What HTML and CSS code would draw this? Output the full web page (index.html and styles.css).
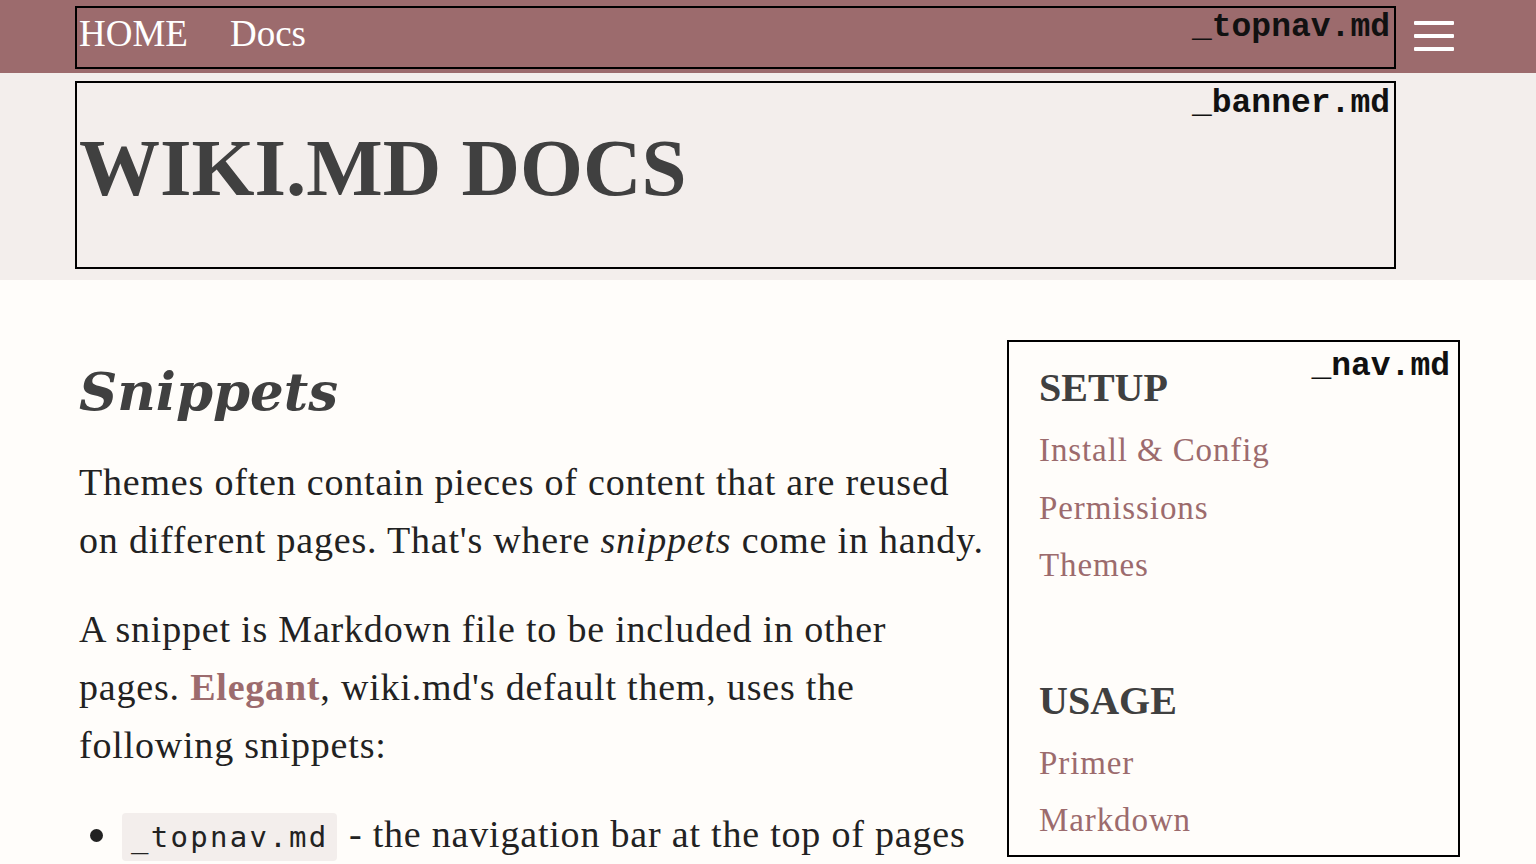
FILE: index.html
```html
<!DOCTYPE html>
<html lang="en">
<head>
<meta charset="utf-8">
<title>Snippets - wiki.md docs</title>
<link rel="stylesheet" href="styles.css">
</head>
<body>
<header class="topbar">
  <div class="wrap topbar-inner">
    <nav class="snippet-box topnav">
      <a class="topnav-link" href="#">HOME</a>
      <a class="topnav-link" href="#">Docs</a>
      <span class="snippet-label">_topnav.md</span>
    </nav>
    <button class="burger" aria-label="Menu">
      <span></span><span></span><span></span>
    </button>
  </div>
</header>
<section class="banner">
  <div class="wrap banner-inner">
    <div class="snippet-box banner-box">
      <h1 class="site-title">WIKI.MD DOCS</h1>
      <span class="snippet-label">_banner.md</span>
    </div>
  </div>
</section>
<main class="wrap main">
  <article class="content">
    <h1 class="page-title">Snippets</h1>
    <p>Themes often contain pieces of content that are reused on different pages. That's where <em>snippets</em> come in handy.</p>
    <p>A snippet is Markdown file to be included in other pages. <a class="strong-link" href="#">Elegant</a>, wiki.md's default them, uses the following snippets:</p>
    <ul class="list">
      <li><code>_topnav.md</code> - the navigation bar at the top of pages</li>
    </ul>
  </article>
  <aside class="snippet-box sidenav">
    <span class="snippet-label">_nav.md</span>
    <h2 class="side-head">SETUP</h2>
    <a class="side-link" href="#">Install &amp; Config</a>
    <a class="side-link" href="#">Permissions</a>
    <a class="side-link" href="#">Themes</a>
    <h2 class="side-head usage">USAGE</h2>
    <a class="side-link" href="#">Primer</a>
    <a class="side-link" href="#">Markdown</a>
  </aside>
</main>
</body>
</html>
```
FILE: styles.css
```css
* { box-sizing: border-box; }
html, body { margin: 0; padding: 0; }
body {
  background: #fffdfa;
  color: #222;
  font-family: "Liberation Serif", "DejaVu Serif", serif;
  overflow: hidden;
}
a { text-decoration: none; }
.wrap {
  margin-left: 75px;
  width: 1385px;
}
.topbar {
  background: #9c6b6d;
  height: 73px;
  padding-top: 6px;
}
.topbar-inner {
  display: flex;
  align-items: flex-start;
}
.snippet-box {
  position: relative;
  border: 2px solid #000;
}
.snippet-label {
  position: absolute;
  top: 3px;
  right: 4px;
  font-family: "Liberation Mono", monospace;
  font-weight: bold;
  font-size: 33px;
  line-height: 1;
  letter-spacing: 0;
  color: #111;
}
.topnav {
  width: 1321px;
  height: 63px;
  display: flex;
  align-items: center;
  gap: 42px;
  padding: 0 0 8px 2px;
}
.topnav-link {
  color: #fff;
  font-size: 37px;
  line-height: 1;
}
.burger {
  margin: 15px 0 0 18px;
  width: 40px;
  height: 30px;
  padding: 0;
  border: 0;
  background: transparent;
  display: flex;
  flex-direction: column;
  justify-content: space-between;
}
.burger span {
  display: block;
  height: 4px;
  width: 40px;
  background: #fff;
  border-radius: 1px;
}
.banner {
  background: #f3eeec;
  padding: 8px 0 11px;
}
.banner-box {
  width: 1321px;
  height: 188px;
  padding-left: 2px;
}
.banner-box .snippet-label { top: 4px; }
.site-title {
  margin: 0;
  padding-top: 45px;
  font-size: 81px;
  font-weight: bold;
  line-height: 1;
  color: #404040;
}
.main {
  display: flex;
  align-items: flex-start;
  gap: 16px;
  padding-top: 60px;
}
.content {
  width: 916px;
  flex: none;
  padding-left: 4px;
}
.page-title {
  margin: 22px 0 33px;
  font-family: "DejaVu Serif", serif;
  font-size: 53px;
  font-style: italic;
  font-weight: bold;
  color: #404040;
  line-height: 1.1;
}
.content p {
  margin: 0 0 31px;
  font-size: 38px;
  letter-spacing: 0.8px;
  line-height: 58px;
}
.strong-link {
  color: #9c6b6d;
  font-weight: bold;
}
.list {
  margin: 0;
  padding: 0;
  list-style: none;
  font-size: 38px;
  letter-spacing: 0.8px;
  line-height: 58px;
}
.list li::before {
  content: "";
  display: inline-block;
  vertical-align: middle;
  position: relative;
  top: -3px;
  width: 13px;
  height: 13px;
  border-radius: 50%;
  background: #222;
  margin: 0 19px 0 11px;
}
code {
  font-family: "DejaVu Sans Mono", monospace;
  font-size: 29px;
  letter-spacing: 2.3px;
  background: #f3eeec;
  border-radius: 4px;
  padding: 7px 8px 7px 9px;
  margin-right: 2px;
}
.sidenav {
  width: 453px;
  flex: none;
  height: 517px;
  padding: 22px 30px 0 30px;
  display: flex;
  flex-direction: column;
  align-items: flex-start;
}
.sidenav .snippet-label { top: 8px; right: 8px; }
.side-head {
  margin: 0 0 10px;
  font-size: 40px;
  font-weight: bold;
  color: #404040;
  line-height: 1.2;
}
.side-head.usage { margin-top: 82px; margin-bottom: 10px; }
.side-link {
  color: #9c6b6d;
  font-size: 33px;
  letter-spacing: 0.9px;
  line-height: 57.5px;
}
```
